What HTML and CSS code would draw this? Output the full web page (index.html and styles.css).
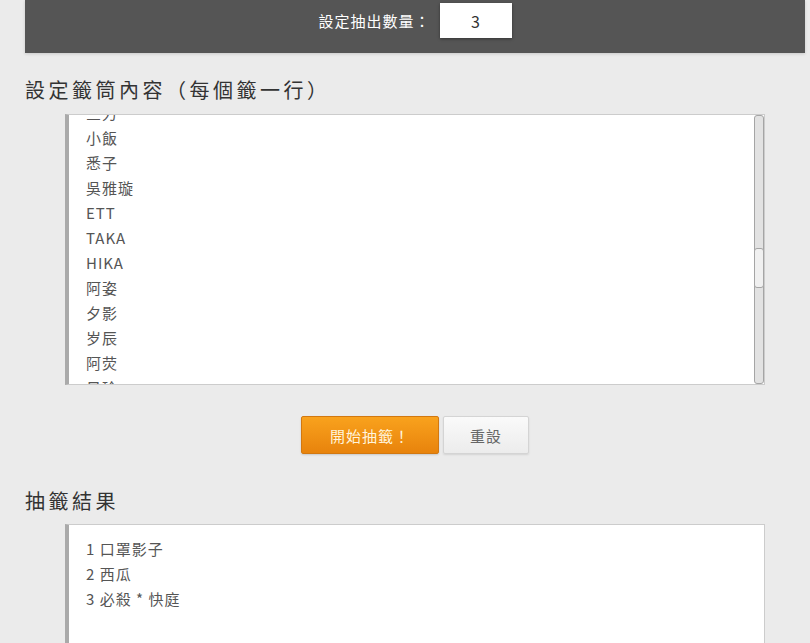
FILE: index.html
```html
<!DOCTYPE html>
<html lang="zh-Hant">
<head>
    <meta charset="UTF-8">
    <meta name="viewport" content="width=device-width, initial-scale=1.0">
    <title>抽籤程式</title>
    <link rel="stylesheet" href="styles.css">
</head>
<body>
    <div class="container">
        <!-- 抽出數量 -->
        <div class="top-bar">
            <label for="draw-count">設定抽出數量：</label>
            <input type="text" id="draw-count" class="count-input" value="3">
        </div>

        <!-- 籤筒內容 -->
        <h2 class="section-title">設定籤筒內容（每個籤一行）</h2>
        <div class="box-wrap">
            <div class="lots-frame">
                <textarea id="lots" class="lots-input" spellcheck="false">阿明
小華
大雄
靜香
胖虎
小夫
阿凱
小綠
阿德
小葵
阿哲
小魚
阿寶
小米
阿福
小熊
阿諾
小真
阿豪
小柔
阿翔
小安
阿樂
小晴
阿傑
小雨
阿光
小璇
阿威
小蘋
阿勇
小莉
阿順
小芸
阿誠
三刃
小飯
悉子
吳雅璇
ETT
TAKA
HIKA
阿姿
夕影
岁辰
阿荧
日玲
口罩影子
西瓜
必殺 * 快庭
阿星
小喬
阿仁
小梅
阿泰
小瑜
阿輝
小蓉
阿弘
小娟
阿祥
小琪
阿富
小薇
阿銘
小倩
阿志
小蕾
阿彬
小婷
阿源
小琳</textarea>
                <div class="scroll-track"><div id="scroll-thumb" class="scroll-thumb"></div></div>
            </div>
        </div>

        <div class="actions">
            <button id="draw-button" class="btn btn-primary">開始抽籤！</button>
            <button id="reset-button" class="btn btn-default">重設</button>
        </div>

        <!-- 抽籤結果 -->
        <h2 class="section-title">抽籤結果</h2>
        <div class="box-wrap">
            <div id="result" class="result-box">
                <div>1 口罩影子</div>
                <div>2 西瓜</div>
                <div>3 必殺 * 快庭</div>
            </div>
        </div>
    </div>

    <script src="script.js"></script>
</body>
</html>
```

FILE: styles.css
```css
body {
    font-family: "Noto Sans CJK TC", "Noto Sans", sans-serif;
    background: #ebebeb;
    color: #333;
    margin: 0;
    padding: 0;
}

.container {
    width: 780px;
    margin-left: 25px;
}

.top-bar {
    height: 53px;
    background: #555;
    box-shadow: 0 1px 3px rgba(0, 0, 0, 0.15);
    display: flex;
    justify-content: center;
    align-items: flex-start;
    padding-top: 3px;
    box-sizing: border-box;
    color: #fff;
    font-size: 15px;
    letter-spacing: 1px;
}

.top-bar label {
    line-height: 35px;
    margin-right: 9px;
}

.count-input {
    width: 72px;
    height: 35px;
    box-sizing: border-box;
    border: none;
    outline: none;
    text-align: center;
    font-family: inherit;
    font-size: 16px;
    color: #333;
    background: #fff;
    box-shadow: 0 1px 3px rgba(0, 0, 0, 0.4);
}

.section-title {
    font-size: 20px;
    font-weight: normal;
    letter-spacing: 3.5px;
    color: #333;
    margin: 0;
    height: 30px;
    line-height: 30px;
}

.container > .section-title:first-of-type {
    margin-top: 22px;
    margin-bottom: 9px;
}

.box-wrap {
    padding-left: 40px;
    width: 700px;
}

.lots-frame {
    position: relative;
    width: 700px;
    height: 271px;
}

.lots-input {
    display: block;
    width: 100%;
    height: 100%;
    box-sizing: border-box;
    margin: 0;
    padding: 0 0 0 17px;
    border: 1px solid #ccc;
    border-left: 4px solid #aaa;
    background: #fff;
    font-family: inherit;
    font-size: 15px;
    letter-spacing: 1px;
    line-height: 25px;
    color: #555;
    resize: none;
    outline: none;
    overflow: hidden;
}

.scroll-track {
    position: absolute;
    top: 1px;
    bottom: 1px;
    right: 1px;
    width: 10px;
    box-sizing: border-box;
    background: #e2e2e2;
    border: 1px solid #a5a5a5;
    border-radius: 3px;
}

.scroll-thumb {
    position: absolute;
    left: -1px;
    right: -1px;
    top: 132px;
    height: 40px;
    box-sizing: border-box;
    background: #f0f0f0;
    border: 1px solid #a5a5a5;
    border-radius: 3px;
}

.actions {
    display: flex;
    justify-content: center;
    gap: 4px;
    margin-top: 31px;
    margin-bottom: 32px;
}

.btn {
    height: 38px;
    padding: 0 26px;
    font-family: inherit;
    font-size: 15px;
    letter-spacing: 1px;
    border-radius: 2px;
    white-space: nowrap;
    cursor: pointer;
}

.btn-primary {
    padding: 0 28px;
    background: linear-gradient(#f9a21d, #e8830c);
    border: 1px solid #d27810;
    color: #fff4dc;
    box-shadow: 0 1px 2px rgba(0, 0, 0, 0.15);
}

.btn-default {
    background: linear-gradient(#fafafa, #ececec);
    border: 1px solid #d4d4d4;
    color: #666;
    box-shadow: 0 1px 2px rgba(0, 0, 0, 0.1);
}

.container > .section-title:last-of-type {
    margin-bottom: 8px;
}

.result-box {
    width: 700px;
    min-height: 140px;
    box-sizing: border-box;
    padding: 11px 17px;
    border: 1px solid #ccc;
    border-left: 4px solid #aaa;
    background: #fff;
    font-size: 15px;
    letter-spacing: 1px;
    line-height: 25px;
    color: #555;
}
```

FILE: script.js
```js
// 讓籤筒停在目前的捲動位置，並同步捲軸
const lots = document.getElementById('lots');
const thumb = document.getElementById('scroll-thumb');

function syncThumb() {
    const track = lots.clientHeight;
    const size = Math.max(20, track * track / lots.scrollHeight);
    const maxScroll = lots.scrollHeight - track;
    const top = maxScroll > 0 ? (track - size) * lots.scrollTop / maxScroll : 0;
    thumb.style.height = size + 'px';
    thumb.style.top = (top - 1) + 'px';
}

lots.scrollTop = 25 * 36 - 10;
syncThumb();
lots.addEventListener('scroll', syncThumb);
```
